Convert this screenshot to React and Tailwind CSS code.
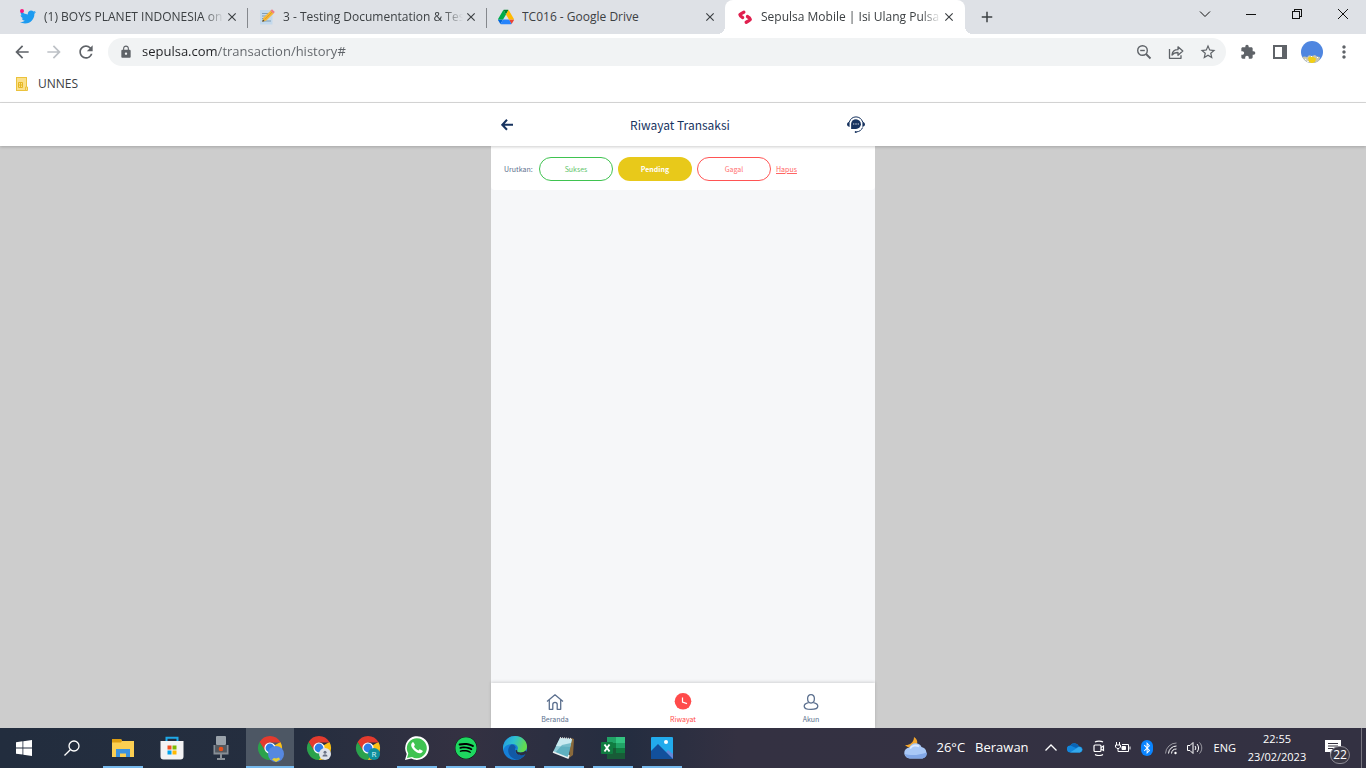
import React from "react";
import {
  MdArrowBack, MdArrowForward, MdRefresh, MdLock, MdExtension, MdStarBorder,
  MdMoreVert, MdClose, MdAdd,
} from "react-icons/md";
import { FaTwitter, FaSpotify, FaBluetoothB } from "react-icons/fa";

const uiFont = "font-['Segoe_UI','Open_Sans','Noto_Sans',sans-serif]";
const appFont = "font-['Noto_Sans_CJK_SC',sans-serif]";

/* ---------- favicons ---------- */

function TwitterIcon() {
  return (
    <span className="relative block size-4">
      <FaTwitter className="size-4 text-[#1d9bf0]" />
      <span className="absolute left-0 top-0 size-1 rounded-full bg-[#f91880]" />
    </span>
  );
}

function MemoIcon() {
  return (
    <svg viewBox="0 0 16 16" className="size-4">
      <rect x="1" y="1" width="12.5" height="14.5" fill="#c3d9ec" />
      <path d="M3 4.500h6M3 7h5M3 9.500h3M3 12h9" stroke="#7f9db5" strokeWidth="1" />
      <path d="M3.300 12.700l1.200-4.200 7.300-7 2.900 2.900-7.400 7.200z" fill="#f5b93a" />
      <path d="M5.800 10.400l7.500-7.500" stroke="#d98f1f" strokeWidth=".8" />
      <path d="M11.500 1.800L13 .3l2.800 2.700-1.400 1.600z" fill="#ee7b86" />
      <path d="M3.300 12.700l.6-2.200 1.700 1.600z" fill="#3c3c3c" />
    </svg>
  );
}

function DriveIcon() {
  return (
    <svg viewBox="0 0 87.3 78" className="size-4">
      <path d="m6.600 66.850 3.850 6.650c.8 1.400 1.950 2.500 3.300 3.300l13.750-23.800h-27.500c0 1.550.4 3.100 1.200 4.500z" fill="#0066da" />
      <path d="m43.650 25-13.750-23.800c-1.350.8-2.500 1.900-3.300 3.300l-25.400 44a9.060 9.060 0 0 0 -1.200 4.500h27.500z" fill="#00ac47" />
      <path d="m73.550 76.800c1.350-.8 2.500-1.900 3.300-3.300l1.600-2.750 7.650-13.250c.8-1.400 1.200-2.950 1.200-4.500h-27.502l5.852 11.500z" fill="#ea4335" />
      <path d="m43.650 25 13.750-23.800c-1.350-.8-2.900-1.200-4.500-1.200h-18.500c-1.600 0-3.150.45-4.500 1.200z" fill="#00832d" />
      <path d="m59.800 53h-32.300l-13.750 23.800c1.350.8 2.900 1.200 4.500 1.200h50.800c1.600 0 3.150-.45 4.500-1.200z" fill="#2684fc" />
      <path d="m73.400 26.500-12.700-22c-.8-1.400-1.950-2.500-3.300-3.300l-13.750 23.800 16.150 28h27.450c0-1.550-.4-3.100-1.200-4.500z" fill="#ffba00" />
    </svg>
  );
}

function SepulsaIcon() {
  return (
    <svg viewBox="0 0 16 16" className="size-4" fill="none" stroke="#e0204f" strokeWidth="3.400" strokeLinecap="round" strokeLinejoin="round">
      <path d="M6.800 3.200C5 4 4 4.500 3 5.600c.3 1.400 1.200 2.200 2.600 2.900" />
      <path d="M10.500 7.600c1.500.6 2.400 1.400 2.700 2.800-.9 1.200-2 1.800-4 2.900" />
    </svg>
  );
}

/* ---------- browser chrome ---------- */

const tabs = [
  { title: "(1) BOYS PLANET INDONESIA on", icon: <TwitterIcon /> },
  { title: "3 - Testing Documentation & Test", icon: <MemoIcon /> },
  { title: "TC016 - Google Drive", icon: <DriveIcon />, short: true },
  { title: "Sepulsa Mobile | Isi Ulang Pulsa S", icon: <SepulsaIcon />, active: true },
];

function Tab({ tab, divider }) {
  return (
    <div
      className={
        "relative flex h-full w-60 min-w-0 shrink items-center pl-3 pr-2 -mr-px " +
        (tab.active ? "rounded-t-lg bg-white" : "")
      }
    >
      <button type="button" className="flex min-w-0 flex-1 items-center gap-2 text-left">
        <span className="shrink-0">{tab.icon}</span>
        <span
          className={
            "flex-1 overflow-hidden whitespace-nowrap text-xs text-[#3c4043] " +
            (tab.short ? "" : "[mask-image:linear-gradient(90deg,#000_calc(100%-20px),transparent)]")
          }
        >
          {tab.title}
        </span>
      </button>
      <button type="button" aria-label="Close tab" className="flex size-4 shrink-0 items-center justify-center">
        <MdClose className="size-3.5 text-[#3c4043]" />
      </button>
      {divider && <span className="absolute right-0 top-2 h-5 w-px bg-[#85888d]" />}
      {tab.active && (
        <>
          <span className="absolute -left-2 bottom-0 size-2 bg-[radial-gradient(circle_at_0_0,transparent_8px,#fff_8px)]" />
          <span className="absolute -right-2 bottom-0 size-2 bg-[radial-gradient(circle_at_100%_0,transparent_8px,#fff_8px)]" />
        </>
      )}
    </div>
  );
}

function WindowButton({ label, children }) {
  return (
    <button type="button" aria-label={label} className="flex h-7 w-[46px] items-center justify-center">
      <svg viewBox="0 0 12 12" className="size-3" fill="none" stroke="#111" shapeRendering="crispEdges">
        {children}
      </svg>
    </button>
  );
}

function TabStrip() {
  return (
    <div className="flex h-[34px] bg-[#dee1e6] pl-2">
      <div className="flex min-w-0 flex-1">
        {tabs.map((t, i) => (
          <Tab key={t.title} tab={t} divider={i < 2} />
        ))}
        <button type="button" aria-label="New tab" className="flex w-[46px] shrink-0 items-center justify-center">
          <MdAdd className="size-[18px] text-[#3c4043]" />
        </button>
      </div>
      <div className="flex shrink-0">
        <WindowButton label="Search tabs"><path d="M1 3.500l5 5 5-5" shapeRendering="auto" /></WindowButton>
        <WindowButton label="Minimize"><path d="M1 6.500h10" /></WindowButton>
        <WindowButton label="Restore"><path d="M1.500 3.500h7v7h-7zM3.500 3.500v-2h7v7h-2" /></WindowButton>
        <WindowButton label="Close"><path d="M1 1l10 10M11 1L1 11" shapeRendering="auto" /></WindowButton>
      </div>
    </div>
  );
}

function ToolButton({ label, children }) {
  return (
    <button type="button" aria-label={label} className="flex size-8 shrink-0 items-center justify-center text-[#5f6368]">
      {children}
    </button>
  );
}

function ZoomOutIcon() {
  return (
    <svg viewBox="0 0 16 16" className="size-4" fill="none" stroke="#5f6368" strokeWidth="1.400">
      <circle cx="6.500" cy="6.500" r="4.800" />
      <path d="M4.200 6.500h4.600" />
      <path d="M10 10l4.500 4.500" strokeWidth="1.800" />
    </svg>
  );
}

function ShareIcon() {
  return (
    <svg viewBox="0 0 16 16" className="size-4" fill="none" stroke="#5f6368" strokeWidth="1.300" strokeLinejoin="round">
      <path d="M1.500 5v9.300h11.500v-3" />
      <path d="M4 11c.3-3.500 2.500-5.300 6-5.300V2.800L14.800 7 10 11.200V8.500c-2.700 0-4.600.7-6 2.500z" />
    </svg>
  );
}

function ProfilePicture() {
  return (
    <svg viewBox="0 0 22 22" className="size-[22px]">
      <clipPath id="profile-clip"><circle cx="11" cy="11" r="11" /></clipPath>
      <g clipPath="url(#profile-clip)">
        <rect width="22" height="22" fill="#4f86e0" />
        <path d="M1 16l3-.5 2 .8 2-2 3 .7 3-1 2 1.500 3 .5-1 6H3z" fill="#c9c6ae" />
        <path d="M7 17l2-1.500 3 .3 3 1.700-1 3.500-3 1.500-3-1.500z" fill="#f2cf15" />
        <path d="M4 18l1.500 1M10 15l1 1M16 17l1-1M6 20l2 1" stroke="#fff" />
      </g>
    </svg>
  );
}

function Toolbar() {
  return (
    <div className="flex h-9 items-center gap-1.5 bg-white px-1.5">
      <div className="flex">
        <ToolButton label="Back"><MdArrowBack className="size-5" /></ToolButton>
        <ToolButton label="Forward"><MdArrowForward className="size-5 text-[#bdc1c6]" /></ToolButton>
        <ToolButton label="Reload"><MdRefresh className="size-5" /></ToolButton>
      </div>
      <div className="flex h-7 min-w-0 flex-1 items-center rounded-full bg-[#f1f3f4] pl-[11px] pr-0.5">
        <MdLock className="mr-[9px] size-3.5 shrink-0 text-[#5f6368]" />
        <input
          type="text"
          aria-label="Address"
          defaultValue="sepulsa.com/transaction/history#"
          className="min-w-0 flex-1 bg-[linear-gradient(90deg,#202124_76px,#5f6368_76px)] bg-clip-text text-[13px] text-transparent outline-none"
        />
        <ToolButton label="Zoom"><ZoomOutIcon /></ToolButton>
        <ToolButton label="Share"><ShareIcon /></ToolButton>
        <ToolButton label="Bookmark"><MdStarBorder className="size-[18px]" /></ToolButton>
      </div>
      <div className="flex">
        <ToolButton label="Extensions"><MdExtension className="size-4" /></ToolButton>
        <ToolButton label="Side panel">
          <svg viewBox="0 0 14 14" className="size-3.5"><path d="M0 0h14v14H0zM2 2v10h7V2z" fill="#5f6368" fillRule="evenodd" /></svg>
        </ToolButton>
        <ToolButton label="Profile"><ProfilePicture /></ToolButton>
        <ToolButton label="Menu"><MdMoreVert className="size-5" /></ToolButton>
      </div>
    </div>
  );
}

function BookmarksBar() {
  return (
    <nav aria-label="Bookmarks" className="flex h-[33px] items-center border-b border-[#d9d9d9] bg-white px-4 pb-1">
      <a href="#unnes" className="flex items-center gap-2.5 text-xs text-[#3c4043]">
        <svg viewBox="0 0 12 14" className="h-3.5 w-3">
          <rect x=".5" y=".5" width="10" height="13" fill="#fbe08a" stroke="#ebc23c" />
          <path d="M2.500 5.500h4v5h-4zM4.500 5.500v5M2.500 8h4" stroke="#e6b722" fill="none" />
          <path d="M9.500 10h2v3.500h-2z" fill="#fbe08a" stroke="#ebc23c" />
        </svg>
        UNNES
      </a>
    </nav>
  );
}

/* ---------- Sepulsa page ---------- */

function SupportIcon() {
  return (
    <svg viewBox="0 0 18 18" className="size-[18px]">
      <path d="M2.300 6C3.500 2.600 5.900.9 9 .9s5.500 1.700 6.700 5.100M15.600 11.500c-1 2.600-3 4-6 4.400" fill="none" stroke="#17335f" strokeWidth="1" />
      <path d="M2.600 5.700v5.200C1 10.600 0 9.700 0 8.300s1-2.300 2.600-2.600zM15.400 5.700v5.200c1.600-.3 2.600-1.200 2.600-2.600s-1-2.300-2.600-2.600z" fill="#17335f" />
      <path d="M4.100 13V8a4.900 4.900 0 1 1 4.900 5z" fill="#17335f" />
      <circle cx="8.800" cy="16" r="1.100" fill="#17335f" />
      <path d="M6.200 8h1.100M8.400 8h1.200M10.700 8h1.100" stroke="#fff" strokeWidth="1.200" />
    </svg>
  );
}

function PageHeader() {
  return (
    <header className="relative z-10 h-[43px] bg-white shadow-[0_1px_3px_rgba(0,0,0,0.2)]">
      <div className="mx-auto flex h-full w-full max-w-96 items-center justify-between px-2.5 text-[#17335f]">
        <button type="button" aria-label="Kembali">
          <svg viewBox="0 0 12 12" className="size-3" fill="none" stroke="currentColor" strokeWidth="2">
            <path d="M6 .8L1.300 5.800 6 10.800M1.300 5.800H12" />
          </svg>
        </button>
        <h1 className="text-xs font-normal">Riwayat Transaksi</h1>
        <button type="button" aria-label="Bantuan"><SupportIcon /></button>
      </div>
    </header>
  );
}

function FilterBar() {
  return (
    <section className="flex h-11 items-center gap-[5px] rounded-b-sm bg-white px-[13px] pt-0.5 text-[7px]">
      <span className="w-[30px] text-[#5b6f8e]">Urutkan:</span>
      <button type="button" className="h-6 w-[74px] rounded-full border border-[#3fc350] text-[#5fc46c]">Sukses</button>
      <button type="button" className="h-6 w-[74px] rounded-full bg-[#e8c91a] font-bold text-white">Pending</button>
      <button type="button" className="h-6 w-[74px] rounded-full border border-[#ff5454] text-[#ff7373]">Gagal</button>
      <a href="#hapus" className="text-[#ff6464] underline underline-offset-1">Hapus</a>
    </section>
  );
}

function BottomNav() {
  const item = "flex flex-1 flex-col items-center gap-[3px] text-[7px] leading-[10px] ";
  return (
    <nav aria-label="Menu utama" className="flex h-[45px] bg-white pt-2.5 shadow-[0_-1px_3px_rgba(0,0,0,0.15)]">
      <a href="#beranda" className={item + "text-[#5b6f8e]"}>
        <svg viewBox="0 0 18 18" className="size-[18px]" fill="none" stroke="currentColor" strokeWidth="1.300" strokeLinejoin="round">
          <path d="M1 8.500L9 1.800l8 6.700M3.300 7v9.300h3.500v-4.800c0-1.300.9-2.200 2.200-2.200s2.200.9 2.200 2.200v4.800h3.500V7" />
        </svg>
        Beranda
      </a>
      <a href="#riwayat" className={item + "text-[#ff4b4b]"}>
        <svg viewBox="0 0 18 18" className="size-[18px]">
          <circle cx="9" cy="8.300" r="8.300" fill="#ff4b4b" />
          <path d="M8.500 4.500v4.500l4.500 1.600" fill="none" stroke="#fff" strokeWidth="1.200" />
        </svg>
        Riwayat
      </a>
      <a href="#akun" className={item + "text-[#5b6f8e]"}>
        <svg viewBox="0 0 18 18" className="size-[18px]" fill="none" stroke="currentColor" strokeWidth="1.300">
          <path d="M9 1.700c-2.200 0-3.400 1.500-3.400 3.900 0 2.600 1.300 4.500 3.400 4.500s3.400-1.900 3.400-4.500c0-2.400-1.200-3.900-3.400-3.900z" />
          <path d="M6.600 9.600c-2.800.6-4.400 1.700-4.400 3.600 0 2.200 2.800 3.200 6.800 3.200s6.800-1 6.800-3.200c0-1.900-1.600-3-4.400-3.600" />
        </svg>
        Akun
      </a>
    </nav>
  );
}

function SepulsaPage() {
  return (
    <div className={"flex flex-1 flex-col bg-[#cdcdcd] " + appFont}>
      <PageHeader />
      <main className="mx-auto flex w-full max-w-96 flex-1 flex-col bg-[#f6f7f9]">
        <FilterBar />
        <div className="flex-1" />
        <BottomNav />
      </main>
    </div>
  );
}

/* ---------- taskbar ---------- */

function ChromeLogo({ badge }) {
  return (
    <svg viewBox="0 0 24 24" className="size-6 overflow-visible">
      <path d="M12 12L22.400 6A12 12 0 0 1 12 24z" fill="#fbc116" />
      <path d="M12 6.500h10.600L22.400 6A12 12 0 0 0 1.600 6l5.200 9z" fill="#e33b2e" />
      <path d="M7.200 14.700L1.600 6A12 12 0 0 0 12 24l4.800-9.200z" fill="#2ba24c" />
      <circle cx="12" cy="12" r="5.600" fill="#fff" />
      <circle cx="12" cy="12" r="4.400" fill="#2f7de9" />
      {badge === "photo" && (
        <>
          <circle cx="18" cy="18" r="8" fill="#5688e0" />
          <path d="M14 23.500l2-1.500 2 .5 3-1 1 2-4 2.500z" fill="#e5cf35" />
        </>
      )}
      {badge === "person" && (
        <>
          <circle cx="18" cy="18" r="6" fill="#dfe3ea" />
          <circle cx="18" cy="16.300" r="1.500" fill="#6a7183" />
          <path d="M15.500 20.500c0-3 5-3 5 0z" fill="#6a7183" />
        </>
      )}
      {badge === "R" && (
        <>
          <circle cx="18" cy="18" r="6" fill="#0f8f9c" />
          <text x="18" y="20.800" textAnchor="middle" fontSize="8" fill="#d8f4f6" fontFamily="Open Sans">R</text>
        </>
      )}
    </svg>
  );
}

function ExplorerIcon() {
  return (
    <svg viewBox="0 0 22 20" className="h-5 w-[22px]">
      <path d="M0 1h9l1 2h12v16H0z" fill="#fccf52" />
      <path d="M0 1h9l1 2-1 1.500H0z" fill="#dd9d12" />
      <path d="M4 11h14v8h-4v-3.500H8V19H4z" fill="#3c93df" />
    </svg>
  );
}

function StoreIcon() {
  return (
    <svg viewBox="0 0 24 24" className="size-6">
      <path d="M6.500 5V1.800h11V5" fill="none" stroke="#1fa9e8" strokeWidth="2" />
      <path d="M.5 5h23v15.500a3 3 0 0 1-3 3h-17a3 3 0 0 1-3-3z" fill="#f3f3f4" />
      <path d="M7.500 9.500h4v4h-4z" fill="#f25022" />
      <path d="M12.500 9.500h4v4h-4z" fill="#7fba00" />
      <path d="M7.500 14.500h4v4h-4z" fill="#00a4ef" />
      <path d="M12.500 14.500h4v4h-4z" fill="#ffb900" />
    </svg>
  );
}

function RecorderIcon() {
  return (
    <svg viewBox="0 0 16 24" className="h-6 w-4">
      <rect x="3" y="0" width="10" height="9" rx="1" fill="#9aa2aa" />
      <rect x="3" y="9" width="10" height="8" fill="#54595f" />
      <path d="M1.500 9v8.500h13V9" fill="none" stroke="#878e96" strokeWidth="2" />
      <path d="M8 18v4M4 23h8" stroke="#878e96" strokeWidth="2" />
      <circle cx="8" cy="13" r="2.300" fill="#e8501c" />
    </svg>
  );
}

function WhatsAppIcon() {
  return (
    <svg viewBox="0 0 24 24" className="size-6">
      <path d="M0 24l1.700-6.100A11.900 11.900 0 1 1 6.200 22.400z" fill="#fff" />
      <path d="M2 22l1.300-4.500A10 10 0 1 1 7 21z" fill="#3fc351" />
      <path d="M8.600 6.500c-.4-.5-.9-.5-1.300 0-2.400 2.400-.5 5.400 2 7.900 2.600 2.500 6 4.100 8.100 1.500.6-.7.400-1.200-.2-1.500l-2-1c-.5-.2-.8 0-1.600 1.100-2.100-.7-3.700-2.200-4.600-4.200.9-1 1-1.200.8-1.700z" fill="#fff" />
    </svg>
  );
}

function SpotifyIcon() {
  return (
    <span className="block size-[22px] rounded-full bg-black">
      <FaSpotify className="size-[22px] text-[#1ed760]" />
    </span>
  );
}

function EdgeIcon() {
  return (
    <svg viewBox="0 0 24 24" className="size-6">
      <defs>
        <linearGradient id="edge-top" x1="0" x2="1" y1="0" y2=".3">
          <stop offset="0" stopColor="#2196e3" /><stop offset=".5" stopColor="#2fc0d0" /><stop offset="1" stopColor="#62dc4e" />
        </linearGradient>
      </defs>
      <circle cx="12" cy="12" r="12" fill="#1680d8" />
      <path d="M0 11C1 4.500 6 0 12 0c7 0 12 5 12 10.500 0 4-3 6-6.500 6-3 0-4-1.300-3.200-2.500 1.800-3-.8-6-4.800-6C5 8 1 10 0 15z" fill="url(#edge-top)" />
      <path d="M8.500 8.500C3 11.500 4 22 14 23.700A12 12 0 0 0 22.300 18c-4.800 2.500-10.300.5-10.300-4 0-2 .8-2.500.8-2.500C12 9.500 10.500 8.300 8.500 8.500z" fill="#1259a5" />
      <path d="M14.300 14c-.8 1.200.2 2.500 3.200 2.500 2 0 4-.7 5.200-2l1.300 2-1.700 1.700c-4.500 2.200-9.800.5-9.800-4z" fill="#2a2d40" />
    </svg>
  );
}

function NotepadIcon() {
  return (
    <svg viewBox="0 0 24 24" className="size-6">
      <path d="M19 2l3 1-1 16-4 3z" fill="#8a6a3b" />
      <path d="M8 2l12 1-4 19-15-6z" fill="#8fcbd8" />
      <path d="M8 2l12 1-2 8-14-1z" fill="#c9eaf0" />
      <path d="M10 9l9-2-3 15-13-5z" fill="#3f9fb0" opacity=".6" />
      <path d="M1 16l15 6 1-3" fill="none" stroke="#e8eef0" strokeWidth="1.500" />
      <path d="M8 2l12 1" stroke="#dadada" strokeWidth="2" strokeDasharray="1 1" />
    </svg>
  );
}

function ExcelIcon() {
  return (
    <svg viewBox="0 0 24 22" className="h-[22px] w-6">
      <path d="M6 0h9v6H6z" fill="#21a366" /><path d="M15 0h9v6h-9z" fill="#33c481" />
      <path d="M6 6h9v5H6z" fill="#107c41" /><path d="M15 6h9v5h-9z" fill="#21a366" />
      <path d="M6 11h18v11H6z" fill="#185c37" /><path d="M15 11h9v5h-9z" fill="#107c41" />
      <rect y="5" width="12" height="12" rx="1" fill="#107c41" />
      <path d="M3.500 7.500l5 7M8.500 7.500l-5 7" stroke="#fff" strokeWidth="1.900" />
    </svg>
  );
}

function PhotosIcon() {
  return (
    <svg viewBox="0 0 22 22" className="size-[22px]">
      <rect width="22" height="22" rx="1" fill="#22abec" />
      <path d="M9 22l8-9 5 4v5z" fill="#6587d8" />
      <path d="M0 14l7-7 15 15H0z" fill="#12509c" />
      <circle cx="15" cy="5" r="2" fill="#fff" />
    </svg>
  );
}

const apps = [
  { name: "File Explorer", icon: <ExplorerIcon />, open: true },
  { name: "Microsoft Store", icon: <StoreIcon /> },
  { name: "Voice Recorder", icon: <RecorderIcon /> },
  { name: "Chrome", icon: <ChromeLogo badge="photo" />, active: true },
  { name: "Chrome profile A", icon: <ChromeLogo badge="person" /> },
  { name: "Chrome profile R", icon: <ChromeLogo badge="R" /> },
  { name: "WhatsApp", icon: <WhatsAppIcon />, open: true },
  { name: "Spotify", icon: <SpotifyIcon />, open: true },
  { name: "Edge", icon: <EdgeIcon />, open: true },
  { name: "Notepad", icon: <NotepadIcon />, open: true },
  { name: "Excel", icon: <ExcelIcon />, open: true },
  { name: "Photos", icon: <PhotosIcon />, open: true },
];

function TaskButton({ app }) {
  return (
    <button
      type="button"
      aria-label={app.name}
      className={"relative flex h-10 w-12 items-center justify-center " + (app.active ? "bg-[#4d5764]" : "")}
    >
      {app.icon}
      {(app.open || app.active) && (
        <span className={"absolute bottom-0 h-0.5 bg-[#76b9ed] " + (app.active ? "inset-x-0" : "inset-x-1")} />
      )}
    </button>
  );
}

function WeatherIcon() {
  return (
    <svg viewBox="0 0 24 24" className="size-6 shrink-0">
      <path d="M10 1c5 3 4 9-1 10.500C6 12.500 3 11 1 9c4 .5 9-2 9-8z" fill="#f3a62c" />
      <path d="M6 22.500a5.500 5.500 0 0 1-.5-11A6.500 6.500 0 0 1 17.500 11 6 6 0 0 1 18.500 22.500z" fill="#a9c8f6" />
      <path d="M6 22.500a5.500 5.500 0 0 1-5-4.500c6 2 15 1 22-1.500a6 6 0 0 1-4.500 6z" fill="#82a7e6" />
      <path d="M6 12.500c2-3 6-4 9-2" stroke="#dce9fd" strokeWidth="2" fill="none" />
    </svg>
  );
}

function TrayButton({ label, children }) {
  return (
    <button type="button" aria-label={label} className="flex h-10 w-6 items-center justify-center">
      {children}
    </button>
  );
}

function Tray() {
  return (
    <div className="flex shrink-0 items-center text-[11px] text-white">
      <button type="button" className="mr-2.5 flex items-center gap-2 text-[13px]">
        <WeatherIcon />
        <span className="flex gap-2.5"><span>26°C</span><span>Berawan</span></span>
      </button>
      <TrayButton label="Show hidden icons">
        <svg viewBox="0 0 12 12" className="size-3" fill="none" stroke="#fff" strokeWidth="1.300"><path d="M.5 8.500L6 3l5.500 5.500" /></svg>
      </TrayButton>
      <TrayButton label="OneDrive">
        <svg viewBox="0 0 16 10" className="h-2.5 w-4">
          <path d="M3.500 9.500a3.500 3.500 0 0 1-.3-7A5 5 0 0 1 12 3.500a3 3 0 0 1 1 6z" fill="#1286dc" />
          <path d="M3.500 2.500a4.800 4.800 0 0 1 8.500 1L9 5z" fill="#0a64b4" />
          <path d="M3 9.500L12 3.700a3 3 0 0 1 1 5.800z" fill="#33a9ec" />
        </svg>
      </TrayButton>
      <TrayButton label="Meet now">
        <svg viewBox="0 0 14 16" className="h-4 w-3.5" fill="none" stroke="#fff" strokeWidth="1.200">
          <rect x="2" y="5" width="7" height="6.500" rx="1" /><path d="M9 7.500L11.500 6v4.500L9 9" /><path d="M3 2c2-1.300 6-1.300 8 0M3 14.500c2 1.300 6 1.300 8 0" />
        </svg>
      </TrayButton>
      <TrayButton label="Battery">
        <svg viewBox="0 0 16 12" className="h-3 w-4" fill="none" stroke="#fff">
          <path d="M1.500 0v3M4.500 0v3M.5 3h5v2l-1.500 1.500h-2L.5 5zM3 6.500v3h2M7 2.500h6.500v7H5M15 4.500v3" />
          <path d="M7 4.500h3.500v3H7z" fill="#fff" />
        </svg>
      </TrayButton>
      <TrayButton label="Bluetooth">
        <span className="flex h-4 w-3 items-center justify-center rounded-full bg-[#0a84ff]"><FaBluetoothB className="size-3" /></span>
      </TrayButton>
      <TrayButton label="Wi-Fi">
        <svg viewBox="0 0 14 14" className="size-3.5" fill="none" stroke="#fff">
          <path d="M1.500 12.500A11 11 0 0 1 12.500 2" opacity=".5" />
          <path d="M4.500 12.500a8 8 0 0 1 8-7.500M7.500 12.500a5 5 0 0 1 5-4.500" /><circle cx="11.500" cy="12" r="1.200" fill="#fff" stroke="none" />
        </svg>
      </TrayButton>
      <TrayButton label="Volume">
        <svg viewBox="0 0 16 14" className="h-3.5 w-4" fill="none" stroke="#fff">
          <path d="M.5 4.500h2.500l3-3v11l-3-3H.5zM8 5c1 1.200 1 2.800 0 4M10 3c2 2.300 2 5.700 0 8" /><path d="M12.500 1.500c3 3.200 3 7.800 0 11" opacity=".5" />
        </svg>
      </TrayButton>
      <button type="button" className="ml-[7px]">ENG</button>
      <button type="button" className="flex h-10 w-[82px] flex-col items-center justify-center leading-[18px]">
        <span>22:55</span>
        <span>23/02/2023</span>
      </button>
      <button type="button" aria-label="Notifications" className="relative flex h-10 w-[43px] items-center pl-[7px]">
        <svg viewBox="0 0 16 16" className="size-4">
          <path d="M0 0h16v12H8l-3 3v-3H0z" fill="#fff" /><path d="M3 3.500h10M3 6h10M3 8.500h7" stroke="#35323f" />
        </svg>
        <span className="absolute bottom-1 left-3 flex h-[18px] w-5 items-center justify-center rounded-full border border-[#8d8b95] bg-[#3a3845] text-xs">22</span>
      </button>
      <button type="button" aria-label="Show desktop" className="h-10 w-[5px] border-l border-[#77757f]" />
    </div>
  );
}

function Taskbar() {
  return (
    <footer className="flex h-10 justify-between bg-[linear-gradient(90deg,#222d3e_0%,#252e3f_22%,#343142_34%,#242d40_46%,#343142_54%,#333142_100%)]">
      <div className="flex">
        <button type="button" aria-label="Start" className="flex w-12 items-center justify-center">
          <svg viewBox="0 0 16 16" className="size-4" fill="#fff"><path d="M0 2.200l6.500-.9v6.200H0zM7.300 1.200L16 0v7.500H7.300zM0 8.400h6.500v6.200L0 13.700zM7.300 8.400H16V16l-8.700-1.300z" /></svg>
        </button>
        <button type="button" aria-label="Search" className="mr-[3px] flex w-12 items-center justify-center">
          <svg viewBox="0 0 16 16" className="size-4" fill="none" stroke="#fff" strokeWidth="1.300"><circle cx="10" cy="6" r="5" /><path d="M6.300 9.700L.5 15.500" /></svg>
        </button>
        <div className="flex gap-px">
          {apps.map((a) => <TaskButton key={a.name} app={a} />)}
        </div>
      </div>
      <Tray />
    </footer>
  );
}

export default function App() {
  return (
    <div className={"flex min-h-screen flex-col " + uiFont}>
      <TabStrip />
      <Toolbar />
      <BookmarksBar />
      <SepulsaPage />
      <Taskbar />
    </div>
  );
}
